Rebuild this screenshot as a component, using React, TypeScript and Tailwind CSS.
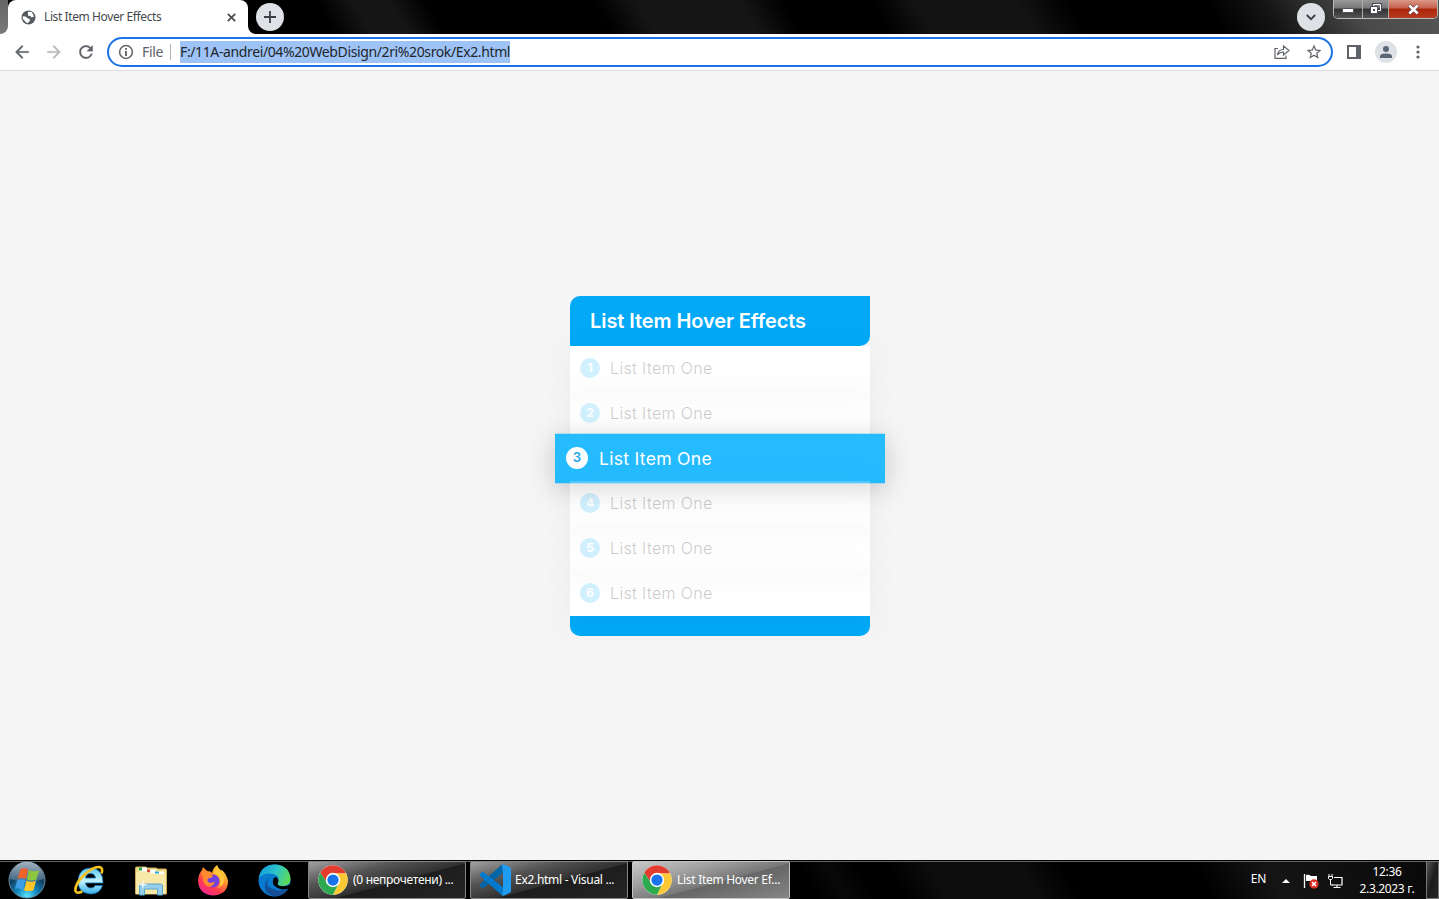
import React from 'react';

const items = [1, 2, 3, 4, 5, 6];

function Chrome() {
  return (
    <svg width="30" height="30" viewBox="0 0 48 48" className="shrink-0">
      <circle cx="24" cy="24" r="23.5" fill="#fff" />
      <path d="M3.65 12.25A23.5 23.5 0 0 1 44.35 12.25L44.6 13.5H24A10.5 10.5 0 0 0 14.9 29.25Z" fill="#e33b2e" />
      <path d="M44.35 12.25A23.5 23.5 0 0 1 24 47.5L33.1 29.25A10.5 10.5 0 0 0 24 13.5H45Z" fill="#fcc934" />
      <path d="M24 47.5A23.5 23.5 0 0 1 3.65 12.25L14.9 29.25A10.5 10.5 0 0 0 33.1 29.25Z" fill="#2da94f" />
      <circle cx="24" cy="24" r="11.5" fill="#fff" />
      <circle cx="24" cy="24" r="9" fill="#1a73e8" />
    </svg>
  );
}

function VsCode() {
  return (
    <svg width="32" height="32" viewBox="0 0 32 32" className="shrink-0">
      <path d="M23 .5L.8 20.600a1 1 0 0 0 0 1.400l2 1.800a1.300 1.300 0 0 0 1.700 0L24 9Z" fill="#0065a9" />
      <path d="M23 31.500L.8 11.400a1 1 0 0 1 0-1.400l2-1.800a1.300 1.300 0 0 1 1.700 0L24 23Z" fill="#007acc" />
      <path d="M23 31.500c1 .4 1.400.1 2 0l6-2.800q1-.5 1-1.700V5q0-1.200-1-1.700L25 .5q-1.200-.5-2 .2l1 8.200v14.200Z" fill="#1f9cf0" />
    </svg>
  );
}

function StartOrb() {
  return (
    <svg width="38" height="38" viewBox="0 0 38 38" className="shrink-0">
      <defs>
        <radialGradient id="orb" cx=".5" cy=".95" r=".85">
          <stop offset="0" stopColor="#5be6ff" />
          <stop offset=".35" stopColor="#1385bd" />
          <stop offset=".7" stopColor="#123f62" />
          <stop offset="1" stopColor="#30465a" />
        </radialGradient>
        <linearGradient id="shine" x1="0" y1="0" x2="0" y2="1">
          <stop offset="0" stopColor="#cbd9e4" stopOpacity=".75" />
          <stop offset="1" stopColor="#7e9fb5" stopOpacity=".4" />
        </linearGradient>
      </defs>
      <circle cx="19" cy="19" r="18" fill="url(#orb)" stroke="#6d8ca0" strokeWidth="1" />
      <path d="M2 18A17 17 0 0 1 36 18Q19 24 2 18Z" fill="url(#shine)" />
      <path d="M12.300 8.500Q16 6.200 20 8.500L17.800 18Q14 16 9.500 18Z" fill="#f0622c" />
      <path d="M21 9Q25.500 11.500 31 9L28.500 18.500Q23.500 20.500 18.800 18.500Z" fill="#8dc63f" />
      <path d="M9.200 19.300Q13.500 17.500 17.500 19.200L15 28.700Q11 26 6.800 28Z" fill="#3e9ee5" />
      <path d="M18.500 19.700Q23 21.800 28 19.700L25.500 29.200Q21 31 16 29.200Z" fill="#ffc425" />
    </svg>
  );
}

function Explorer() {
  return (
    <svg width="34" height="32" viewBox="0 0 34 32" className="shrink-0">
      <path d="M1.500 4q0-1 1-1h9l2 1h9l1 1h8q1 0 1 1v24H1.500Z" fill="#f1dc8c" stroke="#c9aa55" />
      <path d="M5 3.500h8v4H5zM12.500 5.500h9v4h-9zM21 7.500h9v4h-9z" fill="#fff" />
      <path d="M5 3.500h3v3H5z" fill="#22a637" />
      <path d="M13 5.500h3v3h-3z" fill="#d44936" />
      <path d="M21 7.500h4v2h-4z" fill="#2da7e0" />
      <path d="M2 8h12l3 2h14.500v20H2Z" fill="#f8e9a9" />
      <path d="M5.500 31V22q0-2 2-2h19q2 0 2 2v9h-5v-6h-13v6Z" fill="#96cfeb" stroke="#5ba6ca" />
      <path d="M9 15l.8 4.500 4.200 1-4.200 1L9 26l-.8-4.500-4.200-1 4.200-1Z" fill="#fff" opacity=".85" />
    </svg>
  );
}

function InternetExplorer() {
  return (
    <svg width="32" height="32" viewBox="0 0 32 32" className="shrink-0">
      <defs>
        <linearGradient id="ie" x1="0" y1="0" x2="0" y2="1">
          <stop offset="0" stopColor="#5dcbf5" />
          <stop offset=".5" stopColor="#c2f1ff" />
          <stop offset="1" stopColor="#35aee8" />
        </linearGradient>
      </defs>
      <path fillRule="evenodd" d="M30 19H12.500q.8 5 5.500 5 3 0 4.200-2.500H29.500Q27 30 17.500 30 5 29 5 17 6 4 18 4q12 1 12 15ZM12.500 14h10q-.5-4.500-5-4.500T12.500 14Z" fill="url(#ie)" stroke="#1476b5" strokeWidth=".8" />
      <path d="M28.500 9.500Q30.500 4 26.500 3 20 2.500 11 11 2 20 2.300 26.500q1 4 7 1" fill="none" stroke="#f6c21c" strokeWidth="2.600" />
    </svg>
  );
}

function Firefox() {
  return (
    <svg width="32" height="32" viewBox="0 0 32 32" className="shrink-0">
      <defs>
        <linearGradient id="fox" x1=".85" y1="0" x2=".2" y2="1">
          <stop offset="0" stopColor="#fff04c" />
          <stop offset=".35" stopColor="#ff9b28" />
          <stop offset=".7" stopColor="#ff3850" />
          <stop offset="1" stopColor="#ee24a2" />
        </linearGradient>
      </defs>
      <path d="M20 1q1 3 4 5.500l1-.5q5 5 6 11Q31 30 17 31.500 2 31 1 17q0-6 4-11l1-3 4 4 3.500.5L15 9Q16 4 20 1Z" fill="url(#fox)" />
      <circle cx="16" cy="17" r="6.500" fill="#7140dd" />
      <path d="M4 7q6 1 8.500 3.500l3.500 1q-1 3-5 3-1.500 2.500 1 4 3 1 6-1-2 6-7 5-6-3-5-9Z" fill="#ff8b30" />
      <path d="M17 9q6 2 6 8 1 5-3 7 8-2 7-10-3-7-8-9Z" fill="#ffc83b" />
    </svg>
  );
}

function Edge() {
  return (
    <svg width="33" height="33" viewBox="0 0 33 33" className="shrink-0">
      <defs>
        <linearGradient id="edgeTop" x1="0" y1=".3" x2="1" y2=".6">
          <stop offset="0" stopColor="#139dde" />
          <stop offset=".5" stopColor="#2bc3c8" />
          <stop offset="1" stopColor="#60da55" />
        </linearGradient>
      </defs>
      <circle cx="16.500" cy="16.500" r="16" fill="#087bd0" />
      <path d="M.8 14Q3 .5 17 .5 31 1 32.500 14q.3 8-8 8-6 0-4.500-4 2-7-5-8Q6 8 .8 14Z" fill="url(#edgeTop)" />
      <path d="M13 12q-7 6-1 14 7 7 17 .5Q20 36 9 29q-6-9 4-17Z" fill="#124f9b" />
      <path d="M18 13q4 3 1.500 7 1 2.500 6 2.200 4 0 6.500-2v3.300l-2.500 1.500Q20 27 15 20Q14 14 18 13Z" fill="#000" />
      <path d="M11 22Q17 29 29.500 25 22 35 12 31Z" fill="#164f96" />
    </svg>
  );
}

function ToolIcon({ d, color = '#5f6368' }: { d: string; color?: string }) {
  return (
    <svg width="20" height="20" viewBox="0 0 24 24" fill={color} stroke={color} strokeWidth=".3" className="shrink-0">
      <path d={d} />
    </svg>
  );
}

function WindowControls() {
  return (
    <div className="flex h-[19px] w-[105px] shrink-0 overflow-hidden rounded-b-[5px] border border-t-0 border-[#b9b9b9]">
      <div className="flex w-[29px] items-center justify-center border-r border-[#aaa] bg-[linear-gradient(#999_0%,#777_45%,#303030_50%,#555_100%)]">
        <svg width="13" height="6" className="mt-1"><rect x=".5" y=".5" width="11" height="4" rx=".5" fill="#fff" stroke="#50505f" /></svg>
      </div>
      <div className="flex w-[26px] items-center justify-center border-r border-[#aaa] bg-[linear-gradient(#999_0%,#777_45%,#303030_50%,#555_100%)]">
        <svg width="13" height="12" viewBox="0 0 13 12">
          <path d="M4 1h8v7H4z" fill="none" stroke="#4b4b5a" strokeWidth="2" /><path d="M4.500 1.500h7v6h-7z" fill="none" stroke="#fff" />
          <path d="M1.500 3.500h7v7h-7z" fill="#fff" stroke="#4b4b5a" /><path d="M4 6h2v2H4z" fill="#4b4b5a" />
        </svg>
      </div>
      <div className="flex flex-1 items-center justify-center bg-[linear-gradient(#dc9888_0%,#c4604b_45%,#ac2609_50%,#b93b20_100%)]">
        <svg width="13" height="11" viewBox="0 0 13 11"><path d="M2 1.500L11 9.500M11 1.500L2 9.500" stroke="#60393d" strokeWidth="4" /><path d="M2.300 1.500L10.700 9.500M10.700 1.500L2.300 9.500" stroke="#fff" strokeWidth="2.500" /></svg>
      </div>
    </div>
  );
}

function TabStrip() {
  return (
    <div className="flex h-[34px] bg-[linear-gradient(60deg,#000_0,#000_23%,#151515_25.5%,#151515_28%,#000_30.5%,#000_42%,#151515_45%,#151515_52%,#000_55%,#000_61%,#131313_64%,#131313_71%,#000_74.5%,#000_84%,#151515_88%,#4a4a4a_94%,#555_100%)]">
      <div className="h-full w-2 shrink-0 bg-white">
        <div className="h-full rounded-br-[8px] bg-linear-to-b from-[#666] to-[#7a7a7a]" />
      </div>
      <div className="flex w-[240px] shrink-0 items-center rounded-t-[8px] bg-white pl-[13px] pr-[12px]">
        <svg width="15" height="15" viewBox="0 0 15 15" className="shrink-0">
          <circle cx="7.500" cy="7.500" r="7" fill="#565b60" />
          <path d="M1.800 6.200q3 0 4 1.300t3 1.500v1.800L7 13 5 12.500 3 10l-1.200-.7ZM7 1.700L10.800 2 13 6.500l-2.500 1-1-1.600-2.300-.2-.3-1.700Z" fill="#fff" />
        </svg>
        <span className="ml-2 w-[180px] whitespace-nowrap font-['Noto_Sans','Open_Sans',sans-serif] text-[12px] tracking-[-0.4px] text-[#45494d]">List Item Hover Effects</span>
        <svg width="9" height="9" viewBox="0 0 9 9" className="ml-auto"><path d="M.8.8l7.400 7.400M8.200.8L.8 8.200" stroke="#45494d" strokeWidth="1.700" /></svg>
      </div>
      <div className="h-full w-2 shrink-0 bg-white"><div className="h-full rounded-bl-[8px] bg-black" /></div>
      <div className="mt-[3px] flex size-7 shrink-0 items-center justify-center rounded-full bg-[#dee1e6]">
        <svg width="12" height="12" viewBox="0 0 12 12"><path d="M6 0v12M0 6h12" stroke="#3c4043" strokeWidth="1.800" /></svg>
      </div>
      <div className="ml-auto mr-[8px] mt-[3px] flex size-7 shrink-0 items-center justify-center rounded-full bg-[#dee1e6]">
        <svg width="10" height="7" viewBox="0 0 10 7"><path d="M.8 1l4.200 4.200L9.200 1" fill="none" stroke="#3c4043" strokeWidth="1.800" /></svg>
      </div>
      <WindowControls />
      <div className="w-px shrink-0" />
    </div>
  );
}

function Toolbar() {
  return (
    <div className="flex h-[37px] items-center border-b border-[#dadce0] bg-white font-['Noto_Sans','Open_Sans',sans-serif] text-[14px]">
      <div className="flex w-[107px] shrink-0 gap-3 pl-3">
        <ToolIcon d="M20 11H7.830l5.590-5.590L12 4l-8 8 8 8 1.410-1.410L7.830 13H20v-2z" />
        <ToolIcon color="#b9bbbd" d="M12 4l-1.410 1.410L16.170 11H4v2h12.170l-5.580 5.590L12 20l8-8z" />
        <ToolIcon d="M17.650 6.350A7.960 7.960 0 0 0 12 4c-4.420 0-8 3.580-8 8s3.580 8 8 8c3.730 0 6.840-2.550 7.730-6h-2.080A5.990 5.990 0 0 1 12 18c-3.310 0-6-2.690-6-6s2.690-6 6-6c1.660 0 3.140.69 4.220 1.780L13 11h7V4l-2.350 2.350z" />
      </div>
      <div className="flex h-[30px] w-[1226px] shrink-0 items-center rounded-full border-2 border-[#1a73e8] pl-[9px] pr-[8px]">
        <svg width="16" height="16" viewBox="0 0 16 16" className="shrink-0"><circle cx="8" cy="8" r="6.400" fill="none" stroke="#5f6368" strokeWidth="1.500" /><path d="M7.200 4h1.600v1.700H7.200zM7.200 7h1.600v5H7.200z" fill="#45494d" /></svg>
        <span className="ml-2 w-[21px] whitespace-nowrap pb-px text-[#5f6368] tracking-[-0.3px]">File</span>
        <div className="ml-[7px] h-4 w-px bg-[#aeb1b5]" />
        <div className="ml-[9px] flex h-[22px] w-[330px] items-center whitespace-nowrap bg-[#9dc3f7] pb-[2px] tracking-[-0.38px] text-[#23262a]">F:/11A-andrei/04%20WebDisign/2ri%20srok/Ex2.html</div>
        <svg width="16" height="16" viewBox="0 0 16 16" fill="none" stroke="#5f6368" strokeWidth="1.200" className="ml-auto"><path d="M4 4.500H1V14.300h11V11.500M3.500 11q.5-5.500 6-5.500V2l5.500 4.500L9.500 11V8q-4 0-6 3Z" /></svg>
        <div className="ml-[15px] flex"><svg width="18" height="18" viewBox="0 0 24 24" fill="#5f6368"><path d="m22 9.240-7.190-.62L12 2 9.190 8.630 2 9.240l5.460 4.730L5.820 21 12 17.270 18.180 21l-1.630-7.030L22 9.240zM12 15.400l-3.760 2.270 1-4.280-3.320-2.880 4.380-.38L12 6.100l1.710 4.040 4.380.38-3.320 2.880 1 4.280L12 15.400z" /></svg></div>
      </div>
      <svg width="14" height="14" viewBox="0 0 14 14" className="ml-[14px] shrink-0"><path d="M0 0h14v14H0zM2 2v10h7V2z" fillRule="evenodd" fill="#5f6368" /></svg>
      <div className="ml-[14px] flex size-[22px] shrink-0 items-center justify-center rounded-full bg-[#dee1e6]">
        <svg width="12" height="12" viewBox="0 0 12 12" fill="#5b6677"><circle cx="6" cy="3" r="3" /><path d="M0 12V9.500Q1 7.500 6 7.500t6 2V12Z" /></svg>
      </div>
      <svg width="4" height="14" viewBox="0 0 4 14" fill="#5f6368" className="ml-[19px] shrink-0"><circle cx="2" cy="2" r="1.600" /><circle cx="2" cy="7" r="1.600" /><circle cx="2" cy="12" r="1.600" /></svg>
    </div>
  );
}

function ListItem({ n }: { n: number }) {
  const active = n === 3;
  return (
    <li className={active
      ? "flex h-[45px] scale-110 items-center bg-[#25bcff] px-[10px] pb-px text-white shadow-[0_5px_25px_rgba(0,0,0,0.2)]"
      : "flex h-[45px] items-center bg-white px-[10px] pb-px text-black opacity-20 shadow-[0_5px_25px_rgba(0,0,0,0.17)]"}>
      <span className={active
        ? "flex size-5 items-center justify-center rounded-full bg-white text-[12px] font-semibold text-[#25a5e8]"
        : "flex size-5 items-center justify-center rounded-full bg-[#25bcff] text-[12px] font-bold text-white"}>{n}</span>
      <span className={active ? "ml-[10px] whitespace-nowrap text-[16px] tracking-[0.24px]" : "ml-[10px] whitespace-nowrap text-[16px] font-light tracking-[0.36px]"}>List Item One</span>
    </li>
  );
}

function Task({ icon, label, active = false }: { icon: React.ReactNode; label: string; active?: boolean }) {
  return (
    <div className={active
      ? "flex h-[38px] w-[158px] shrink-0 items-center rounded-[2px] border border-[#c4c4c4] bg-[linear-gradient(165deg,#c9c9c9_0%,#a0a0a0_30%,#777_55%,#666_56%,#858585_100%)] pl-[9px] text-white"
      : "flex h-[38px] w-[158px] shrink-0 items-center rounded-[2px] border border-[#858585] bg-[linear-gradient(165deg,#a1a1a1_0%,#555_30%,#303030_55%,#1d1d1d_56%,#252525_100%)] pl-[9px] text-white"}>
      <div className="-mr-[3px] flex w-[35px] shrink-0 items-center">{icon}</div>
      <span className="ml-[3px] whitespace-nowrap text-[12px] tracking-[-0.29px]">{label}</span>
    </div>
  );
}

function Taskbar() {
  return (
    <footer className="flex h-[39px] items-center border-t border-black bg-[linear-gradient(60deg,#000_0,#000_56%,#080808_58%,#000_60%,#000_62%,#0d0d0d_65%,#0d0d0d_71%,#000_74%,#000_83%,#151515_88%,#080808_100%)] font-['Noto_Sans','Open_Sans',sans-serif] shadow-[inset_0_1px_0_#666]">
      <div className="flex w-[308px] shrink-0 items-center pl-2">
        <StartOrb />
        <div className="ml-[27px]"><InternetExplorer /></div>
        <div className="ml-[29px]"><Explorer /></div>
        <div className="ml-[29px]"><Firefox /></div>
        <div className="ml-[29px]"><Edge /></div>
      </div>
      <div className="flex gap-1">
        <Task icon={<Chrome />} label="(0 непрочетени) ..." />
        <Task icon={<div className="-ml-[1px]"><VsCode /></div>} label="Ex2.html - Visual ..." />
        <Task icon={<Chrome />} label="List Item Hover Ef..." active />
      </div>
      <div className="ml-auto flex shrink-0 items-center text-[12px] leading-[17px] text-white">
        <span className="mb-[4px] tracking-[-0.3px]">EN</span>
        <svg width="8" height="5" className="ml-[16px]"><path d="M0 5l4-4 4 4Z" fill="#fff" /></svg>
        <svg width="16" height="16" viewBox="0 0 16 16" className="ml-[13px] mt-[2px]"><path d="M1.500 1v14" stroke="#fff" strokeWidth="1.300" /><path d="M3 2q3-1 5 1h6v6H9L8 8H3Z" fill="#fff" /><circle cx="11" cy="11" r="4.700" fill="#d92d22" /><path d="M9 9l4 4M13 9l-4 4" stroke="#fff" strokeWidth="1.600" /></svg>
        <svg width="15" height="15" viewBox="0 0 15 15" className="ml-[9px] mt-[2px]"><path d="M6 3.500h8v7.500H4M9 11v2.500M5.500 13.500h7" fill="none" stroke="#fff" strokeWidth="1.200" /><path d="M.5 2.500h4v2l-1 1h-2l-1-1ZM1 0v2.500M4 0v2.500M2.500 5v6H5" fill="none" stroke="#fff" strokeWidth="1" /></svg>
        <div className="ml-[15px] w-[58px] text-center tracking-[-0.35px]"><div>12:36</div><div className="whitespace-nowrap">2.3.2023 г.</div></div>
        <div className="ml-[10px] h-[38px] w-[13px] border border-[#777] bg-linear-to-br from-[#555] via-[#1c1c1c] to-[#252525]" />
      </div>
    </footer>
  );
}

export default function App() {
  return (
    <div className="flex h-[899px] w-[1439px] flex-col overflow-hidden bg-[#f5f5f5]">
      <TabStrip />
      <Toolbar />
      <main className="flex min-h-0 flex-1 items-center justify-center pl-px pt-px font-['Inter',sans-serif]">
        <section className="w-[300px]">
          <h1 className="flex h-[50px] items-center rounded-tl-[10px] rounded-br-[10px] bg-[#03a9f7] pl-5 text-[20px] font-semibold tracking-[-0.08px] text-white">List Item Hover Effects</h1>
          <ul className="bg-white">{items.map((n) => <ListItem key={n} n={n} />)}</ul>
          <div className="h-5 rounded-b-[10px] bg-[#03a9f7]" />
        </section>
      </main>
      <Taskbar />
    </div>
  );
}
